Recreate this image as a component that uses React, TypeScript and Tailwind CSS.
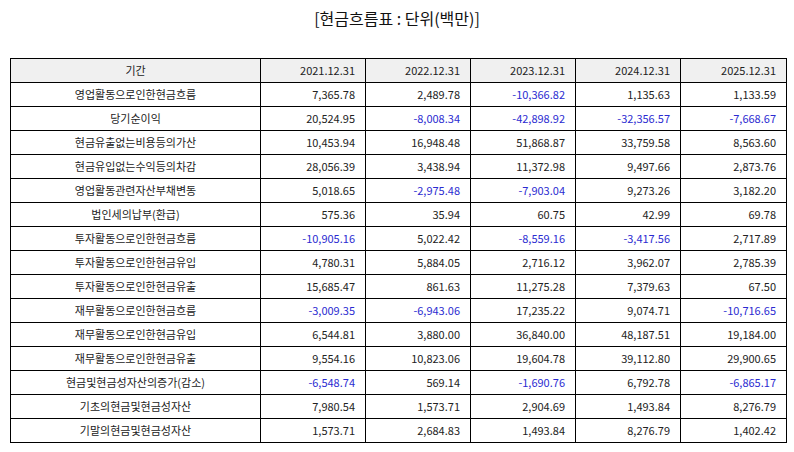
const years = ["2021.12.31", "2022.12.31", "2023.12.31", "2024.12.31", "2025.12.31"];

const rows: [string, string[]][] = [
  ["영업활동으로인한현금흐름", ["7,365.78", "2,489.78", "-10,366.82", "1,135.63", "1,133.59"]],
  ["당기순이익", ["20,524.95", "-8,008.34", "-42,898.92", "-32,356.57", "-7,668.67"]],
  ["현금유출없는비용등의가산", ["10,453.94", "16,948.48", "51,868.87", "33,759.58", "8,563.60"]],
  ["현금유입없는수익등의차감", ["28,056.39", "3,438.94", "11,372.98", "9,497.66", "2,873.76"]],
  ["영업활동관련자산부채변동", ["5,018.65", "-2,975.48", "-7,903.04", "9,273.26", "3,182.20"]],
  ["법인세의납부(환급)", ["575.36", "35.94", "60.75", "42.99", "69.78"]],
  ["투자활동으로인한현금흐름", ["-10,905.16", "5,022.42", "-8,559.16", "-3,417.56", "2,717.89"]],
  ["투자활동으로인한현금유입", ["4,780.31", "5,884.05", "2,716.12", "3,962.07", "2,785.39"]],
  ["투자활동으로인한현금유출", ["15,685.47", "861.63", "11,275.28", "7,379.63", "67.50"]],
  ["재무활동으로인한현금흐름", ["-3,009.35", "-6,943.06", "17,235.22", "9,074.71", "-10,716.65"]],
  ["재무활동으로인한현금유입", ["6,544.81", "3,880.00", "36,840.00", "48,187.51", "19,184.00"]],
  ["재무활동으로인한현금유출", ["9,554.16", "10,823.06", "19,604.78", "39,112.80", "29,900.65"]],
  ["현금및현금성자산의증가(감소)", ["-6,548.74", "569.14", "-1,690.76", "6,792.78", "-6,865.17"]],
  ["기초의현금및현금성자산", ["7,980.54", "1,573.71", "2,904.69", "1,493.84", "8,276.79"]],
  ["기말의현금및현금성자산", ["1,573.71", "2,684.83", "1,493.84", "8,276.79", "1,402.42"]],
];

export default function App() {
  return (
    <div className="w-[794px] h-[452px] bg-white text-[#222] font-['Noto_Sans_CJK_KR','Noto_Sans',sans-serif]">
      <div className="h-[58px] pt-[8px] flex justify-center text-[16px] leading-[20px] text-[#111]">
        [현금흐름표 : 단위(백만)]
      </div>
      <div className="px-[10px]">
        <table className="w-[776px] table-fixed border-collapse text-[11px]">
          <colgroup>
            <col className="w-[250px]" />
            <col className="w-[105px]" />
            <col className="w-[105px]" />
            <col className="w-[105px]" />
            <col className="w-[105px]" />
            <col className="w-[106px]" />
          </colgroup>
          <thead>
            <tr className="h-[24px] bg-[#f0f0f0]">
              <th className="border border-black font-normal text-center p-0">기간</th>
              {years.map((y) => (
                <th key={y} className="border border-black font-normal text-right pr-[10px] p-0">
                  {y}
                </th>
              ))}
            </tr>
          </thead>
          <tbody>
            {rows.map(([label, vals]) => (
              <tr key={label} className="h-[24px]">
                <td className="border border-black text-center p-0">{label}</td>
                {vals.map((v, i) => (
                  <td
                    key={i}
                    className={
                      v.startsWith("-")
                        ? "border border-black text-right pr-[10px] p-0 text-[#2b2bd1]"
                        : "border border-black text-right pr-[10px] p-0"
                    }
                  >
                    {v}
                  </td>
                ))}
              </tr>
            ))}
          </tbody>
        </table>
      </div>
    </div>
  );
}
